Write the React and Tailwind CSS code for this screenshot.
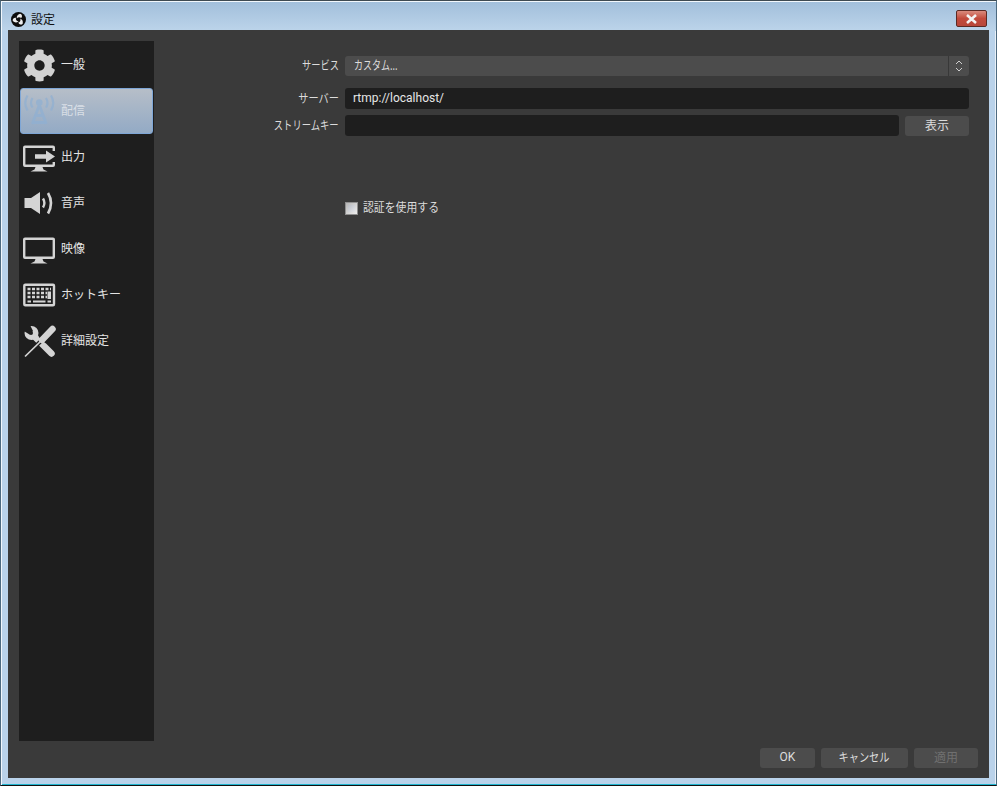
import React from "react";
import { FaCog } from "react-icons/fa";

const C = "#d4d4d4";
const Gear = () => <FaCog className="w-[33px] h-[33px] text-[#d2d2d2]" />;
const Tower = () => (
  <svg width="33" height="33" viewBox="0 0 33 33" fill="none" stroke="#8fb0d3" strokeWidth="2.200" opacity="0.7">
    <circle cx="16.300" cy="7.500" r="3.300" fill="#8fb0d3" stroke="none" />
    <path d="M16.300 10 L9.300 29 M16.300 10 L23.300 29 M12.500 20.500 H20 M10.500 27.500 H22" strokeWidth="2.800" />
    <path d="M9.500 3 Q6.500 8 9.500 12.500 M23 3 Q26 8 23 12.500 M4.500 0.500 Q0 8 4.500 15.500 M28 0.500 Q32.500 8 28 15.500" />
  </svg>
);
const Monitor = ({ arrow }) => (
  <svg width="33" height="33" viewBox="0 0 33 33" fill="none">
    <path d="M2 5.700 H30 Q30.800 5.700 30.800 6.500 V24 Q30.800 24.800 30 24.800 H2 Q1.200 24.800 1.200 24 V6.500 Q1.200 5.700 2 5.700 Z" stroke={C} strokeWidth="2.400" />
    <path d="M12.500 26 H19.500 L20.500 28.500 L24.500 30.500 H7.500 L11.500 28.500 Z" fill={C} />
    {arrow && (
      <>
        <rect x="27" y="10" width="6" height="11" fill="#1e1e1e" />
        <path d="M12 13.200 H23 V9.500 L32 15.500 L23 21.500 V17.800 H12 Z" fill={C} />
      </>
    )}
  </svg>
);
const Speaker = () => (
  <svg width="33" height="33" viewBox="0 0 33 33" fill="none">
    <path d="M1.500 11 H8 L17 5 V27 L8 21 H1.500 Z" fill={C} />
    <path d="M20 11.500 Q22.800 16 20 20.500" stroke={C} strokeWidth="2.400" />
    <path d="M25 6 Q31 16 25 26.500" stroke={C} strokeWidth="2.600" />
  </svg>
);
const Keyboard = () => (
  <svg width="33" height="33" viewBox="0 0 33 33" fill="none">
    <rect x="1.300" y="5.700" width="29.700" height="20.600" rx="1" stroke={C} strokeWidth="2.400" />
    <path d="M4.500 10 H28 M4.500 14 H24 M4.500 18 H24" stroke={C} strokeWidth="2.400" strokeDasharray="3 1.500" />
    <path d="M4.500 22.500 H8 M10 22.500 H22.500 M24.500 22.500 H28" stroke={C} strokeWidth="2.200" />
    <rect x="24.500" y="12.500" width="3.500" height="7.500" fill={C} />
  </svg>
);
const Tools = () => (
  <svg width="33" height="33" viewBox="0 0 33 33" fill="none">
    <circle cx="8.500" cy="8" r="7" fill={C} />
    <path d="M12 12 L28.500 28.500" stroke={C} strokeWidth="6.500" strokeLinecap="round" />
    <path d="M-1 5 L6.500 9.500 L10 6 L6 -2 Z" fill="#1e1e1e" />
    <circle cx="8" cy="8" r="2" fill="#1e1e1e" />
    <path d="M19 15 L29.500 4" stroke="#1e1e1e" strokeWidth="9.500" />
    <path d="M18 16 L2 31.500" stroke="#1e1e1e" strokeWidth="4" />
    <path d="M19 15 L29.500 4" stroke={C} strokeWidth="6.500" strokeLinecap="round" />
    <path d="M19 15 L2 31.500" stroke={C} strokeWidth="1.700" />
  </svg>
);
const ObsLogo = () => (
  <svg width="15" height="15" viewBox="0 0 16 16" className="shrink-0">
    <circle cx="8" cy="8" r="8" fill="#0c0c0c" />
    {[0, 120, 240].map((a) => (
      <path
        key={a}
        transform={`rotate(${a} 8 8)`}
        d="M9.600 1.900 A2.700 2.700 0 0 1 10.900 6.500 A3.500 3.500 0 0 0 6.100 7 A5 5 0 0 1 9.600 1.900 Z"
        fill="#ededed"
      />
    ))}
  </svg>
);

const items = [
  ["一般", <Gear />],
  ["配信", <Tower />],
  ["出力", <Monitor arrow />],
  ["音声", <Speaker />],
  ["映像", <Monitor />],
  ["ホットキー", <Keyboard />],
  ["詳細設定", <Tools />],
];

const Btn = ({ className = "", children }) => (
  <div className={`h-[20px] rounded-[3px] bg-[#4c4c4c] flex items-center justify-center pb-[2px] text-[12px] ${className}`}>{children}</div>
);

const latin = { fontFamily: 'Roboto, "Noto Sans CJK JP", sans-serif' };

export default function App() {
  return (
    <div
      className="w-[997px] h-[786px] overflow-hidden flex flex-col border-t border-t-[#3e4a52] border-b border-b-[#111111] border-x border-x-[#4d6a80] bg-[#b9d2ea] shadow-[inset_1px_1px_0_#f2f7fc,inset_0_-1px_0_#20b5cf,inset_-1px_0_0_#e8f0f8] text-[12px] leading-[16px] text-[#dcdcdc]"
      style={{ fontFamily: '"Noto Sans CJK JP", "Liberation Sans", sans-serif' }}
    >
      <div className="h-[29px] shrink-0 flex mt-[1px] ml-[1px] bg-gradient-to-b from-[#a2bfdb] to-[#bcd4ea] pl-[9px] pr-[9px]">
        <div className="flex items-center gap-[5px] h-[29px] pt-[5px] text-[#111111] text-[12px]">
          <ObsLogo />
          <span>設定</span>
        </div>
        <div className="ml-auto mt-[8px] w-[31px] h-[17px] rounded-[2px] border border-[#5b2a24] bg-gradient-to-b from-[#d98a7d] via-[#c24a3c] to-[#b8473a] flex items-center justify-center">
          <svg width="13" height="10" viewBox="0 0 13 10">
            <path d="M2 1 L11 9 M11 1 L2 9" stroke="#f4f4f4" strokeWidth="2.600" />
          </svg>
        </div>
      </div>

      <div className="ml-[7px] -mt-[1px] w-[981px] h-[748px] bg-[#3a3a3a] flex flex-col">
        <div className="flex h-[711px] pt-[11px] pl-[11px]">
          <div className="w-[135px] h-[700px] bg-[#1e1e1e] flex flex-col pt-[1px]">
            {items.map(([label, icon], i) => (
              <div
                key={label}
                className={
                  i === 1
                    ? "h-[46px] mx-[1px] flex items-center pl-[2px] rounded-[3px] border border-[#7ea6d6] bg-gradient-to-b from-[#b6bec8] to-[#93aac5]"
                    : "h-[46px] mx-[1px] flex items-center pl-[2px] border border-transparent"
                }
              >
                <div className="w-[33px] h-[33px] shrink-0">{icon}</div>
                <span className={i === 1 ? "ml-[5px] pb-[2px] text-[#d9dfe6]" : "ml-[5px] pb-[2px] text-[#e4e4e4]"}>{label}</span>
              </div>
            ))}
          </div>

          <div className="flex-1 pl-[191px] pr-[20px] pt-[15px] flex flex-col">
            <div className="flex h-[20px] gap-[6px] items-center">
              <div className="w-[150px] -ml-[156px] flex justify-end pb-[2px]">
                <span className="whitespace-nowrap origin-right scale-x-[0.77]">サービス</span>
              </div>
              <div className="flex-1 h-[20px] rounded-[3px] bg-[#4c4c4c] flex items-center pl-[9px]">
                <div className="flex-1 pb-[2px]">
                  <span className="inline-block whitespace-nowrap origin-left scale-x-[0.75]">カスタム...</span>
                </div>
                <div className="w-[21px] h-[20px] border-l border-l-[#383838] flex items-center justify-center">
                  <svg width="10" height="14" viewBox="0 0 10 14" fill="none" stroke="#cfcfcf" strokeWidth="1">
                    <path d="M2 5 L5 2 L8 5 M2 9 L5 12 L8 9" />
                  </svg>
                </div>
              </div>
            </div>
            <div className="flex h-[21px] mt-[12px] gap-[6px] items-center">
              <div className="w-[150px] -ml-[156px] flex justify-end pb-[2px]">
                <span className="whitespace-nowrap origin-right scale-x-[0.85]">サーバー</span>
              </div>
              <div className="flex-1 h-[21px] rounded-[3px] bg-[#1e1e1e] flex items-center pl-[8px] pb-[2px] text-[#e6e6e6]" style={latin}>rtmp://localhost/</div>
            </div>
            <div className="flex h-[21px] mt-[6px] gap-[6px] items-center">
              <div className="w-[150px] -ml-[156px] flex justify-end pb-[1px]">
                <span className="whitespace-nowrap origin-right scale-x-[0.775]">ストリームキー</span>
              </div>
              <div className="flex-1 h-[21px] rounded-[3px] bg-[#1e1e1e]" />
              <Btn className="w-[64px]">表示</Btn>
            </div>
            <div className="flex items-center gap-[5px] mt-[64px] h-[16px]">
              <div className="w-[13px] h-[13px] border border-[#8f8f8f] bg-gradient-to-br from-[#b4b4b4] to-[#f0f0f0] p-[2px]">
                <div className="w-full h-full bg-gradient-to-br from-[#b9bdc4] to-[#e4e6ea]" />
              </div>
              <span className="whitespace-nowrap origin-left scale-x-[0.905] pb-[2px]">認証を使用する</span>
            </div>
          </div>
        </div>
        <div className="flex justify-end gap-[6px] pr-[11px] pt-[7px]">
          <Btn className="w-[55px]"><span style={latin}>OK</span></Btn>
          <Btn className="w-[87px]"><span className="whitespace-nowrap scale-x-[0.85]">キャンセル</span></Btn>
          <Btn className="w-[64px] text-[#707070]">適用</Btn>
        </div>
      </div>
    </div>
  );
}
